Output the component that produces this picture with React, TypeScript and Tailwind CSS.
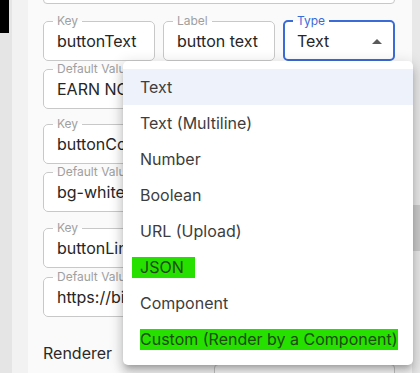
type FieldProps = {
  label: string;
  value: string;
  focused?: boolean;
  select?: boolean;
};

function Field({ label, value, focused, select }: FieldProps) {
  return (
    <div className="relative h-[40px] shrink-0 bg-white rounded-[4px] flex items-center pl-[14px] pr-[12px] min-w-0">
      <fieldset
        className={
          focused
            ? "absolute left-0 right-0 bottom-0 top-[-6px] border-2 border-[#3a6bd6] rounded-[5px] px-[8px] m-0 pointer-events-none"
            : "absolute left-0 right-0 bottom-0 top-[-6px] border border-[#c8c8c8] rounded-[5px] px-[9px] m-0 pointer-events-none"
        }
      >
        <legend
          className={
            focused
              ? "px-[4px] text-[12px] leading-[12px] text-[#3a6bd6]"
              : "px-[4px] text-[12px] leading-[12px] text-[#a0a0a0]"
          }
        >
          {label}
        </legend>
      </fieldset>
      <span className="flex-1 text-[16px] text-[#262626] whitespace-nowrap overflow-hidden">{value}</span>
      {select && (
        <svg width="10" height="5" viewBox="0 0 10 5" className="shrink-0 mr-[1px]">
          <path d="M0 5 L5 0 L10 5 Z" fill="#5a5a5a" />
        </svg>
      )}
    </div>
  );
}

const options = [
  "Text",
  "Text (Multiline)",
  "Number",
  "Boolean",
  "URL (Upload)",
  "JSON",
  "Component",
  "Custom (Render by a Component)",
];

export default function App() {
  return (
    <div
      className="relative w-[420px] h-[373px] overflow-hidden flex bg-[#fafafa]"
      style={{ fontFamily: "Inter, 'Noto Sans', sans-serif" }}
    >
      <div className="w-[12px] shrink-0 bg-[#e5e5e5] flex flex-col">
        <div className="w-[9px] h-[33px] shrink-0 bg-black" />
      </div>
      <div className="w-[16px] shrink-0 bg-[#f2f2f2]" />

      <div className="flex-1 pl-[15px] pr-[17px] flex flex-col">
        <div className="h-[40px] shrink-0 mt-[-36px] bg-white border border-[#c8c8c8] rounded-[4px]" />

        <div className="grid grid-cols-3 gap-[8px] mt-[17px] shrink-0">
          <Field label="Key" value="buttonText" />
          <Field label="Label" value="button text" />
          <Field label="Type" value="Text" focused select />
        </div>
        <div className="mt-[8px] shrink-0">
          <Field label="Default Value" value="EARN NOW" />
        </div>

        <div className="grid grid-cols-3 gap-[8px] mt-[15px] shrink-0">
          <Field label="Key" value="buttonColor" />
          <Field label="Label" value="button color" />
          <Field label="Type" value="Text" select />
        </div>
        <div className="mt-[8px] shrink-0">
          <Field label="Default Value" value="bg-white" />
        </div>

        <div className="grid grid-cols-3 gap-[8px] mt-[16px] shrink-0">
          <Field label="Key" value="buttonLink" />
          <Field label="Label" value="button link" />
          <Field label="Type" value="Text" select />
        </div>
        <div className="mt-[9px] shrink-0">
          <Field label="Default Value" value="https://bit.ly/earn" />
        </div>

        <div className="flex mt-[26px] shrink-0">
          <span className="w-[171px] text-[16px] leading-[20px] text-[#2a2a2a]">Renderer</span>
          <div className="flex-1 mt-[21px] h-[40px] bg-white border border-[#c8c8c8] rounded-[4px]" />
        </div>
      </div>

      <div className="w-[8px] shrink-0 bg-[#e8e8e8] flex flex-col">
        <div className="mt-[205px] h-[46px] shrink-0 bg-[#cbcbcb]" />
      </div>

      <div className="absolute left-[123px] top-[61px] w-[290px] h-[304px] bg-white rounded-[5px] py-[8px] shadow-[0_5px_5px_-3px_rgba(0,0,0,0.2),0_8px_10px_1px_rgba(0,0,0,0.14),0_3px_14px_2px_rgba(0,0,0,0.12)]">
        {options.map((o, i) => (
          <div
            key={o}
            className={
              i === 0
                ? "h-[36px] flex items-center pl-[17px] bg-[#eef2fa] text-[16px] text-[#3d3d3d]"
                : "h-[36px] flex items-center pl-[17px] text-[16px] text-[#3d3d3d]"
            }
          >
            {o === "JSON" ? (
              <span className="ml-[-8px] pl-[8px] pr-[11px] leading-[21px] bg-[#26e000] text-[#1f4a14]">JSON</span>
            ) : o.startsWith("Custom") ? (
              <span className="leading-[21px] bg-[#26e000] text-[#1f4a14]">{o}</span>
            ) : (
              o
            )}
          </div>
        ))}
      </div>
    </div>
  );
}
